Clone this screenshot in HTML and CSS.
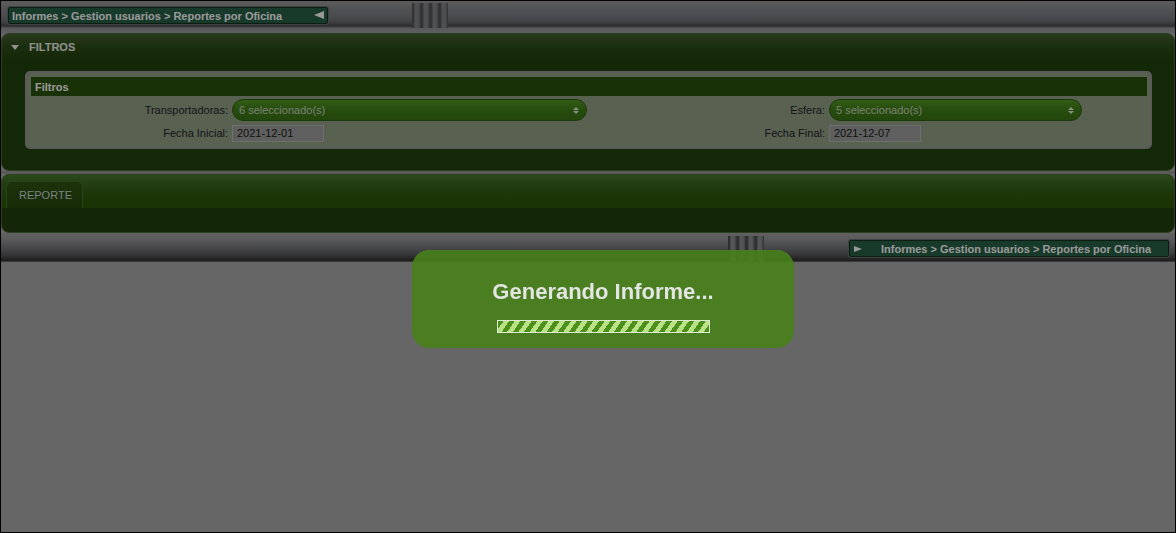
FILE: index.html
```html
<!DOCTYPE html>
<html lang="es">
<head>
<meta charset="utf-8">
<title>Reportes por Oficina</title>
<link rel="stylesheet" href="styles.css">
</head>
<body>
<div class="page">
  <div class="bar bar-top">
    <div class="seg seg-left">
      <div class="crumb crumb-top">
        <span class="crumb-text">Informes &gt; Gestion usuarios &gt; Reportes por Oficina</span>
        <span class="tri-left"></span>
      </div>
    </div>
    <div class="grip"></div>
    <div class="seg seg-fill"></div>
  </div>

  <section class="panel panel-filtros">
    <div class="panel-head">
      <span class="tri-down"></span>
      <span class="panel-title">FILTROS</span>
    </div>
    <div class="panel-body">
      <div class="box">
        <div class="box-title">Filtros</div>
        <div class="form-grid">
          <label class="lbl">Transportadoras:</label>
          <div class="field"><div class="msel msel-wide"><span>6 seleccionado(s)</span><span class="updown"><i class="up"></i><i class="dn"></i></span></div></div>
          <label class="lbl">Esfera:</label>
          <div class="field"><div class="msel msel-narrow"><span>5 seleccionado(s)</span><span class="updown"><i class="up"></i><i class="dn"></i></span></div></div>

          <label class="lbl">Fecha Inicial:</label>
          <div class="field"><div class="date">2021-12-01</div></div>
          <label class="lbl">Fecha Final:</label>
          <div class="field"><div class="date">2021-12-07</div></div>
        </div>
      </div>
    </div>
  </section>

  <div class="sep"></div>

  <section class="panel panel-reporte">
    <div class="tabs">
      <div class="tab">REPORTE</div>
    </div>
    <div class="tab-body"></div>
  </section>

  <div class="bar bar-bottom">
    <div class="seg seg-left2"></div>
    <div class="grip grip-bottom"></div>
    <div class="seg seg-fill seg-right">
      <div class="crumb crumb-bottom">
        <span class="tri-right"></span>
        <span class="crumb-text">Informes &gt; Gestion usuarios &gt; Reportes por Oficina</span>
      </div>
    </div>
  </div>
</div>

<div class="overlay"></div>
<div class="loading">
  <div class="loading-text">Generando Informe...</div>
  <div class="progress"></div>
</div>
</body>
</html>
```

FILE: styles.css
```css
html, body {
  margin: 0;
  padding: 0;
}
body {
  background: #aaaaaa;
  font-family: "Liberation Sans", Arial, sans-serif;
  font-size: 11px;
}
.page {
  box-sizing: border-box;
  width: 1176px;
  height: 533px;
  border: 1px solid #000;
  overflow: hidden;
}

/* pipe bars */
.bar {
  display: flex;
}
.bar-top {
  height: 32px;
}
.bar-top .seg, .bar-top .grip {
  background: linear-gradient(to bottom,
    #989898 0px, #969696 3px, #86888d 8px, #7b7d82 16px,
    #6c6d71 21px, #505052 24px, #4b4b4b 25px,
    #8f9094 27px, #999ba0 29px, #999ba0 32px);
}
.seg-left {
  width: 411px;
  flex: none;
}
.seg-fill {
  flex: 1;
}
.grip {
  width: 36px;
  flex: none;
  position: relative;
}
.bar-top .grip::after {
  content: "";
  position: absolute;
  left: 0; right: 0; top: 2px; bottom: 5px;
  background: repeating-linear-gradient(to right,
    #505052 0px, #5e5e60 2px, #85868a 3px, #85868a 6px, #6a6b6e 8px, #505052 9px);
}

.crumb {
  box-sizing: border-box;
  width: 320px;
  height: 17px;
  background: #286146;
  border: 1px solid #15321f;
  border-radius: 2px;
  box-shadow: 0 0 0 1px #6d6e72;
  color: #ffffff;
  font-weight: bold;
  font-size: 11px;
  display: flex;
  align-items: center;
  position: relative;
}
.crumb-top {
  margin: 6px 0 0 7px;
  padding-left: 3px;
}
.tri-left {
  position: absolute;
  right: 3px;
  top: 3px;
  width: 0; height: 0;
  border-top: 4px solid transparent;
  border-bottom: 4px solid transparent;
  border-right: 10px solid #ffffff;
}

/* panels */
.panel {
  box-sizing: border-box;
  border: 1px solid #4d6a35;
  border-radius: 8px;
}
.panel-filtros {
  height: 138px;
  background: linear-gradient(to bottom, #46602f 0px, #2e4f19 12px, #21430d 26px, #21430d 100%);
}
.panel-head {
  height: 26px;
  display: flex;
  align-items: center;
  padding-left: 9px;
  color: #f0f2ee;
  font-weight: bold;
  font-size: 11px;
}
.tri-down {
  width: 0; height: 0;
  border-left: 4px solid transparent;
  border-right: 4px solid transparent;
  border-top: 5px solid #f0f2ee;
  margin-right: 10px;
}
.panel-body {
  padding: 11px 22px 0 23px;
}
.box {
  border: 2px solid #969696;
  border-radius: 5px;
  background: #95a287;
  padding: 4px 3px 5px 4px;
}
.box-title {
  height: 19px;
  background: #2b530d;
  color: #ffffff;
  font-weight: bold;
  font-size: 11px;
  display: flex;
  align-items: center;
  padding-left: 4px;
}
.form-grid {
  margin-top: 3px;
  display: grid;
  grid-template-columns: 197px 355px 1fr 318px;
  grid-template-rows: 22px 18px;
  column-gap: 4px;
  row-gap: 3px;
}
.lbl {
  text-align: right;
  color: #24242e;
  font-size: 11px;
  display: flex;
  align-items: center;
  justify-content: flex-end;
}
.field {
  display: flex;
  align-items: center;
}
.msel {
  box-sizing: border-box;
  height: 22px;
  border-radius: 11px;
  border: 1px solid #2f5f15;
  background: linear-gradient(to bottom, #579c24 0%, #428119 45%, #3a7514 100%);
  color: #cbd8c0;
  font-size: 11px;
  display: flex;
  align-items: center;
  justify-content: space-between;
  padding: 0 7px 1px 6px;
}
.msel-wide { width: 355px; }
.msel-narrow { width: 253px; }
.updown {
  display: flex;
  flex-direction: column;
  gap: 1px;
  margin-top: 2px;
}
.updown i {
  display: block;
  width: 0; height: 0;
  border-left: 3px solid transparent;
  border-right: 3px solid transparent;
}
.updown .up { border-bottom: 3px solid #e2eedb; }
.updown .dn { border-top: 3px solid #e2eedb; }
.date {
  box-sizing: border-box;
  width: 92px;
  height: 17px;
  background: #9e9e9e;
  border: 1px solid #b9b9b9;
  color: #1a1a1a;
  font-size: 11px;
  padding-left: 4px;
  display: flex;
  align-items: center;
}

.sep {
  height: 3px;
  background: #969696;
}

.panel-reporte {
  height: 59px;
  background: #21400d;
  overflow: hidden;
}
.tabs {
  height: 33px;
  box-sizing: border-box;
  padding: 6px 0 0 4px;
  background: linear-gradient(to bottom, #4d7a33 0px, #3c6a20 8px, #2f5a0d 20px, #2d5708 33px);
  display: flex;
  align-items: flex-end;
}
.tab {
  box-sizing: border-box;
  width: 77px;
  height: 27px;
  border: 1px solid #44722a;
  border-bottom: none;
  border-radius: 6px 6px 0 0;
  background: linear-gradient(to bottom, #2e5411 0%, #284a0d 100%);
  color: #c9d9d9;
  font-size: 11px;
  padding-left: 12px;
  display: flex;
  align-items: center;
}

/* bottom bar */
.bar-bottom {
  height: 29px;
}
.bar-bottom .seg, .bar-bottom .grip {
  background: linear-gradient(to bottom,
    #a2a2a2 0px, #9a9a9c 5px, #85868a 11px, #6e6f73 17px,
    #5e5e62 21px, #4b4b4b 24px, #3a3a3a 26px, #323232 28px, #8a8a8a 29px);
}
.seg-left2 {
  width: 727px;
  flex: none;
}
.grip-bottom::after {
  content: "";
  position: absolute;
  left: 0; right: 0; top: 3px; bottom: 0;
  background: repeating-linear-gradient(to right,
    #4a4a4c 0px, #5a5a5c 2px, #8e8f93 3px, #8e8f93 6px, #6a6b6e 8px, #4a4a4c 9px);
}
.seg-right {
  display: flex;
  justify-content: flex-end;
}
.crumb-bottom {
  margin: 7px 6px 0 0;
  padding-left: 4px;
}
.tri-right {
  width: 0; height: 0;
  border-top: 3px solid transparent;
  border-bottom: 3px solid transparent;
  border-left: 8px solid #ffffff;
  margin-right: 19px;
}

/* modal */
.overlay {
  position: fixed;
  inset: 0;
  background: rgba(0, 0, 0, 0.4);
}
.loading {
  position: fixed;
  left: 412px;
  top: 250px;
  width: 382px;
  height: 98px;
  box-sizing: border-box;
  border-radius: 17px;
  background: rgba(71, 129, 26, 0.9);
  display: flex;
  flex-direction: column;
  align-items: center;
  padding-top: 29px;
}
.loading-text {
  color: #e3e5e2;
  font-weight: bold;
  font-size: 22px;
  line-height: 26px;
}
.progress {
  margin-top: 15px;
  margin-left: 1px;
  box-sizing: border-box;
  width: 213px;
  height: 13px;
  border: 1px solid #dfe9d4;
  background: repeating-linear-gradient(125deg,
    #4c8f1a 0px, #4c8f1a 4.6px, #b9e287 4.6px, #b9e287 9.2px);
}
```
